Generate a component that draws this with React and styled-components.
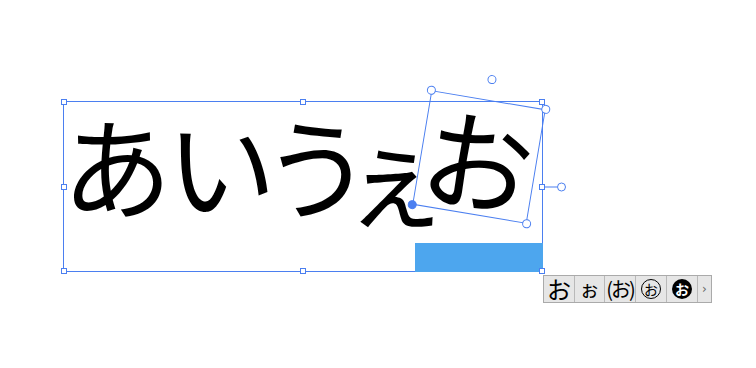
import React from "react"
import styled, { createGlobalStyle } from "styled-components"

const BLUE = "#4b7ff0"
const JP = `"Noto Sans CJK JP", "Noto Sans", sans-serif`

const Global = createGlobalStyle`
  html, body {
    margin: 0;
    background: #ffffff;
  }
`

const Canvas = styled.div`
  position: relative;
  width: 756px;
  height: 368px;
  overflow: hidden;
  background: #fff;
  font-family: ${JP};
`

// text frame on the artboard
const TextFrame = styled.div`
  position: absolute;
  left: 63px;
  top: 101px;
  width: 480px;
  height: 171px;
  border: 1px solid ${BLUE};
  box-sizing: border-box;
`

const TextRow = styled.div`
  display: flex;
  align-items: flex-start;
  padding-top: 6px;
  font-size: 110px;
  line-height: 1;
  color: #000;
  font-feature-settings: "palt";
`

const Glyph = styled.span`
  display: flex;
  justify-content: center;
  flex: none;
  width: ${(p) => p.$w}px;
  transform: translateY(${(p) => p.$dy || 0}px);
`

const Overflow = styled.div`
  position: absolute;
  right: -1px;
  bottom: -1px;
  width: 128px;
  height: 29px;
  background: #4da6ee;
`

// selection handles sit on the frame edge, placed by percentage
const Handle = styled.div`
  position: absolute;
  left: ${(p) => p.$x}%;
  top: ${(p) => p.$y}%;
  width: 6px;
  height: 6px;
  transform: translate(-50%, -50%);
  box-sizing: border-box;
  border: 1px solid ${BLUE};
  background: #fff;
  z-index: 2;
`

const SideGrip = styled.div`
  position: absolute;
  left: 100%;
  top: 50%;
  display: flex;
  align-items: center;
  transform: translateY(-50%);
  padding-left: 3px;
  z-index: 2;
  &::before {
    content: "";
    width: 12px;
    height: 1px;
    background: ${BLUE};
  }
`

const Knob = styled.div`
  width: 9px;
  height: 9px;
  box-sizing: border-box;
  border-radius: 50%;
  border: 1px solid ${BLUE};
  background: ${(p) => (p.$filled ? BLUE : "#fff")};
`

const CornerKnob = styled(Knob)`
  position: absolute;
  left: ${(p) => p.$x}%;
  top: ${(p) => p.$y}%;
  transform: translate(-50%, -50%);
`

const RotateKnob = styled(Knob)`
  position: absolute;
  left: 50%;
  bottom: 100%;
  transform: translate(-50%, -16px);
`

const Rotated = styled.div`
  position: absolute;
  left: 421px;
  top: 99px;
  width: 116px;
  height: 116px;
  transform: rotate(9.5deg);
  z-index: 1;
`

const RotBox = styled.div`
  width: 100%;
  height: 100%;
  box-sizing: border-box;
  border: 1px solid ${BLUE};
  display: flex;
  align-items: center;
  justify-content: center;
  font-size: 110px;
  line-height: 1;
  color: #000;
`

// glyph alternates popup
const Toolbar = styled.div`
  position: absolute;
  left: 543px;
  top: 275px;
  display: flex;
  height: 28px;
  border: 1px solid #aaaaaa;
  box-sizing: border-box;
  background: #e6e6e6;
  z-index: 1;
`

const Cell = styled.div`
  width: ${(p) => p.$w || 31}px;
  box-sizing: border-box;
  display: flex;
  align-items: center;
  justify-content: center;
  border-right: 1px solid #b9b9b9;
  color: #000;
  font-size: ${(p) => p.$size || 22}px;
  line-height: 1;
  &:last-child {
    border-right: none;
  }
`

const Ring = styled.span`
  width: 20px;
  height: 20px;
  box-sizing: border-box;
  border-radius: 50%;
  border: ${(p) => (p.$solid ? "none" : "1.5px solid #000")};
  background: ${(p) => (p.$solid ? "#000" : "transparent")};
  color: ${(p) => (p.$solid ? "#fff" : "#000")};
  display: flex;
  align-items: center;
  justify-content: center;
  font-size: 14px;
  font-weight: ${(p) => (p.$solid ? 700 : 400)};
  line-height: 1;
`

const Paren = styled.span`
  font-size: 20px;
  letter-spacing: -2px;
`

const Chevron = styled.span`
  color: #666;
  font-family: "DejaVu Sans", sans-serif;
  font-size: 12px;
`

const frameHandles = [
  [0, 0], [50, 0], [100, 0],
  [0, 50], [100, 50],
  [0, 100], [50, 100], [100, 100],
]

const corners = [
  [0, 0], [100, 0], [100, 100], [0, 100, true],
]

const App = () => (
  <Canvas>
    <Global />
    <TextFrame>
      <TextRow>
        <Glyph $w={106}>あ</Glyph>
        <Glyph $w={100}>い</Glyph>
        <Glyph $w={92}>う</Glyph>
        <Glyph $w={66} $dy={10}>ぇ</Glyph>
      </TextRow>
      <Overflow />
      {frameHandles.map(([x, y]) => (
        <Handle key={`${x}-${y}`} $x={x} $y={y} />
      ))}
      <SideGrip>
        <Knob />
      </SideGrip>
    </TextFrame>
    <Rotated>
      <RotBox>お</RotBox>
      {corners.map(([x, y, filled]) => (
        <CornerKnob key={`${x}-${y}`} $x={x} $y={y} $filled={filled} />
      ))}
      <RotateKnob />
    </Rotated>
    <Toolbar>
      <Cell $size={24}>お</Cell>
      <Cell $w={30} $size={20}>ぉ</Cell>
      <Cell>
        <Paren>(お)</Paren>
      </Cell>
      <Cell>
        <Ring>お</Ring>
      </Cell>
      <Cell>
        <Ring $solid>お</Ring>
      </Cell>
      <Cell $w={13}>
        <Chevron>›</Chevron>
      </Cell>
    </Toolbar>
  </Canvas>
)

export default App
